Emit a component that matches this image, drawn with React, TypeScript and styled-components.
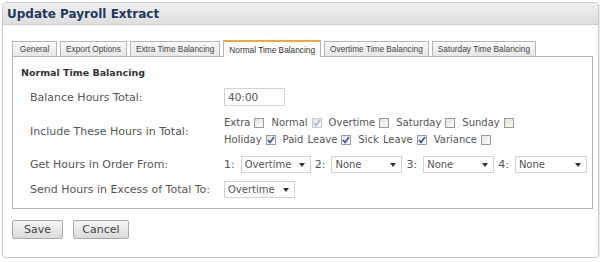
import React from "react";
import styled, { createGlobalStyle, css } from "styled-components";

const Global = createGlobalStyle`
  html, body { margin: 0; padding: 0; background: #fff; }
  body { font-family: "DejaVu Sans", Verdana, sans-serif; }
`;

const Panel = styled.div`
  margin: 2px 0 0 2px;
  width: 597px;
  height: 256px;
  box-sizing: border-box;
  border: 1px solid #c9c9c9;
  border-radius: 4px;
  box-shadow: 1px 1px 1px rgba(0,0,0,0.08);
  overflow: hidden;
  display: flex;
  flex-direction: column;
`;

const Header = styled.div`
  height: 22px;
  box-sizing: border-box;
  background: linear-gradient(#efefef, #dedede);
  border-bottom: 1px solid #cfcfcf;
  display: flex;
  align-items: center;
  padding-left: 4px;
  font-family: "DejaVu Sans", Verdana, sans-serif;
  font-weight: bold;
  font-size: 12px;
  color: #1f3a60;
`;

const Body = styled.div`
  padding: 15px 0 0 9px;
`;

const Tabs = styled.div`
  display: flex;
  align-items: flex-end;
  gap: 3px;
  height: 16px;
  position: relative;
  z-index: 1;
`;

const Tab = styled.div<{ $active?: boolean }>`
  height: 15px;
  min-width: 45px;
  box-sizing: border-box;
  padding: 0 5px;
  border: 1px solid #b4b4b4;
  border-bottom: none;
  background: linear-gradient(#fafafa, #e6e6e6);
  font-family: "Liberation Sans", Arial, sans-serif;
  font-size: 8.3px;
  color: #444;
  display: flex;
  align-items: center;
  justify-content: center;
  white-space: nowrap;
  ${(p) =>
    p.$active &&
    css`
      height: 17px;
      margin-bottom: -1px;
      background: #fff;
      border-top: 2px solid #f2a93b;
      color: #333;
    `}
`;

const Content = styled.div`
  width: 581px;
  height: 153px;
  box-sizing: border-box;
  border: 1px solid #b4b4b4;
  padding: 9px 0 0 8px;
  color: #555;
  font-size: 11px;
`;

const Heading = styled.div`
  font-weight: bold;
  font-size: 9.5px;
  line-height: 14px;
  color: #333;
  margin-bottom: 8px;
`;

const FormGrid = styled.div`
  display: grid;
  grid-template-columns: 194px 1fr;
  row-gap: 8px;
  padding-left: 9px;
  align-items: center;
`;

const Label = styled.div`
  color: #555;
`;

const Field = styled.div`
  display: flex;
  align-items: center;
`;

const TextInput = styled.div`
  width: 61px;
  height: 18px;
  box-sizing: border-box;
  border: 1px solid #d2d2d2;
  padding-left: 3px;
  display: flex;
  align-items: center;
  font-size: 10.5px;
  color: #555;
`;

const CheckLines = styled.div`
  display: flex;
  flex-direction: column;
`;

const CheckLine = styled.div`
  display: flex;
  align-items: center;
  height: 17px;
  gap: 7px;
  font-size: 10px;
  word-spacing: 1px;
`;

const CheckItem = styled.label`
  display: flex;
  align-items: center;
  gap: 4px;
`;

const Box = styled.span<{ $disabled?: boolean }>`
  width: 10px;
  height: 10px;
  box-sizing: border-box;
  border: 1px solid ${(p) => (p.$disabled ? "#c8c8c8" : "#9a9a9a")};
  background: linear-gradient(135deg, #e4e4e4, #fafafa);
  display: inline-flex;
  align-items: center;
  justify-content: center;
`;

const SelectBox = styled.div<{ $w: number }>`
  width: ${(p) => p.$w}px;
  height: 17px;
  box-sizing: border-box;
  border: 1px solid #d2d2d2;
  display: flex;
  align-items: center;
  justify-content: space-between;
  padding: 0 5px 0 3px;
  font-size: 10px;
  color: #555;
`;

const OrderNum = styled.span`
  margin-right: 2px;
`;

const OrderGroup = styled.div`
  display: flex;
  align-items: center;
  gap: 4px;
`;

const Buttons = styled.div`
  display: flex;
  gap: 10px;
  margin-top: 11px;
`;

const Button = styled.button<{ $w: number }>`
  width: ${(p) => p.$w}px;
  height: 19px;
  box-sizing: border-box;
  border: 1px solid #a8a8a8;
  border-radius: 2px;
  background: linear-gradient(#f6f6f6, #d9d9d9);
  font-family: "DejaVu Sans", Verdana, sans-serif;
  font-size: 11px;
  color: #444;
  padding: 0;
`;

const Check = ({ checked, disabled }: { checked?: boolean; disabled?: boolean }) => (
  <Box $disabled={disabled}>
    {checked && (
      <svg width="8" height="8" viewBox="0 0 8 8">
        <path
          d="M1 4 L3 6.5 L7 1"
          fill="none"
          stroke={disabled ? "#a9b8d0" : "#2a4f9a"}
          strokeWidth="1.5"
        />
      </svg>
    )}
  </Box>
);

const Arrow = () => (
  <svg width="6" height="4" viewBox="0 0 6 4">
    <path d="M0 0 L6 0 L3 4 Z" fill="#333" />
  </svg>
);

const Select = ({ value, w }: { value: string; w: number }) => (
  <SelectBox $w={w}>
    <span>{value}</span>
    <Arrow />
  </SelectBox>
);

const tabs = [
  "General",
  "Export Options",
  "Extra Time Balancing",
  "Normal Time Balancing",
  "Overtime Time Balancing",
  "Saturday Time Balancing",
];

export default function App() {
  return (
    <>
      <Global />
      <Panel>
        <Header>Update Payroll Extract</Header>
        <Body>
          <Tabs>
            {tabs.map((t) => (
              <Tab key={t} $active={t === "Normal Time Balancing"}>
                {t}
              </Tab>
            ))}
          </Tabs>
          <Content>
            <Heading>Normal Time Balancing</Heading>
            <FormGrid>
              <Label>Balance Hours Total:</Label>
              <Field>
                <TextInput>40:00</TextInput>
              </Field>
              <Label>Include These Hours in Total:</Label>
              <CheckLines>
                <CheckLine>
                  <CheckItem>Extra <Check /></CheckItem>
                  <CheckItem>Normal <Check checked disabled /></CheckItem>
                  <CheckItem>Overtime <Check /></CheckItem>
                  <CheckItem>Saturday <Check /></CheckItem>
                  <CheckItem>Sunday <Check /></CheckItem>
                </CheckLine>
                <CheckLine>
                  <CheckItem>Holiday <Check checked /></CheckItem>
                  <CheckItem>Paid Leave <Check checked /></CheckItem>
                  <CheckItem>Sick Leave <Check checked /></CheckItem>
                  <CheckItem>Variance <Check /></CheckItem>
                </CheckLine>
              </CheckLines>
              <Label>Get Hours in Order From:</Label>
              <OrderGroup>
                <OrderNum>1:</OrderNum>
                <Select value="Overtime" w={70} />
                <OrderNum>2:</OrderNum>
                <Select value="None" w={71} />
                <OrderNum>3:</OrderNum>
                <Select value="None" w={71} />
                <OrderNum>4:</OrderNum>
                <Select value="None" w={72} />
              </OrderGroup>
              <Label>Send Hours in Excess of Total To:</Label>
              <Field>
                <Select value="Overtime" w={71} />
              </Field>
            </FormGrid>
          </Content>
          <Buttons>
            <Button $w={51}>Save</Button>
            <Button $w={56}>Cancel</Button>
          </Buttons>
        </Body>
      </Panel>
    </>
  );
}
